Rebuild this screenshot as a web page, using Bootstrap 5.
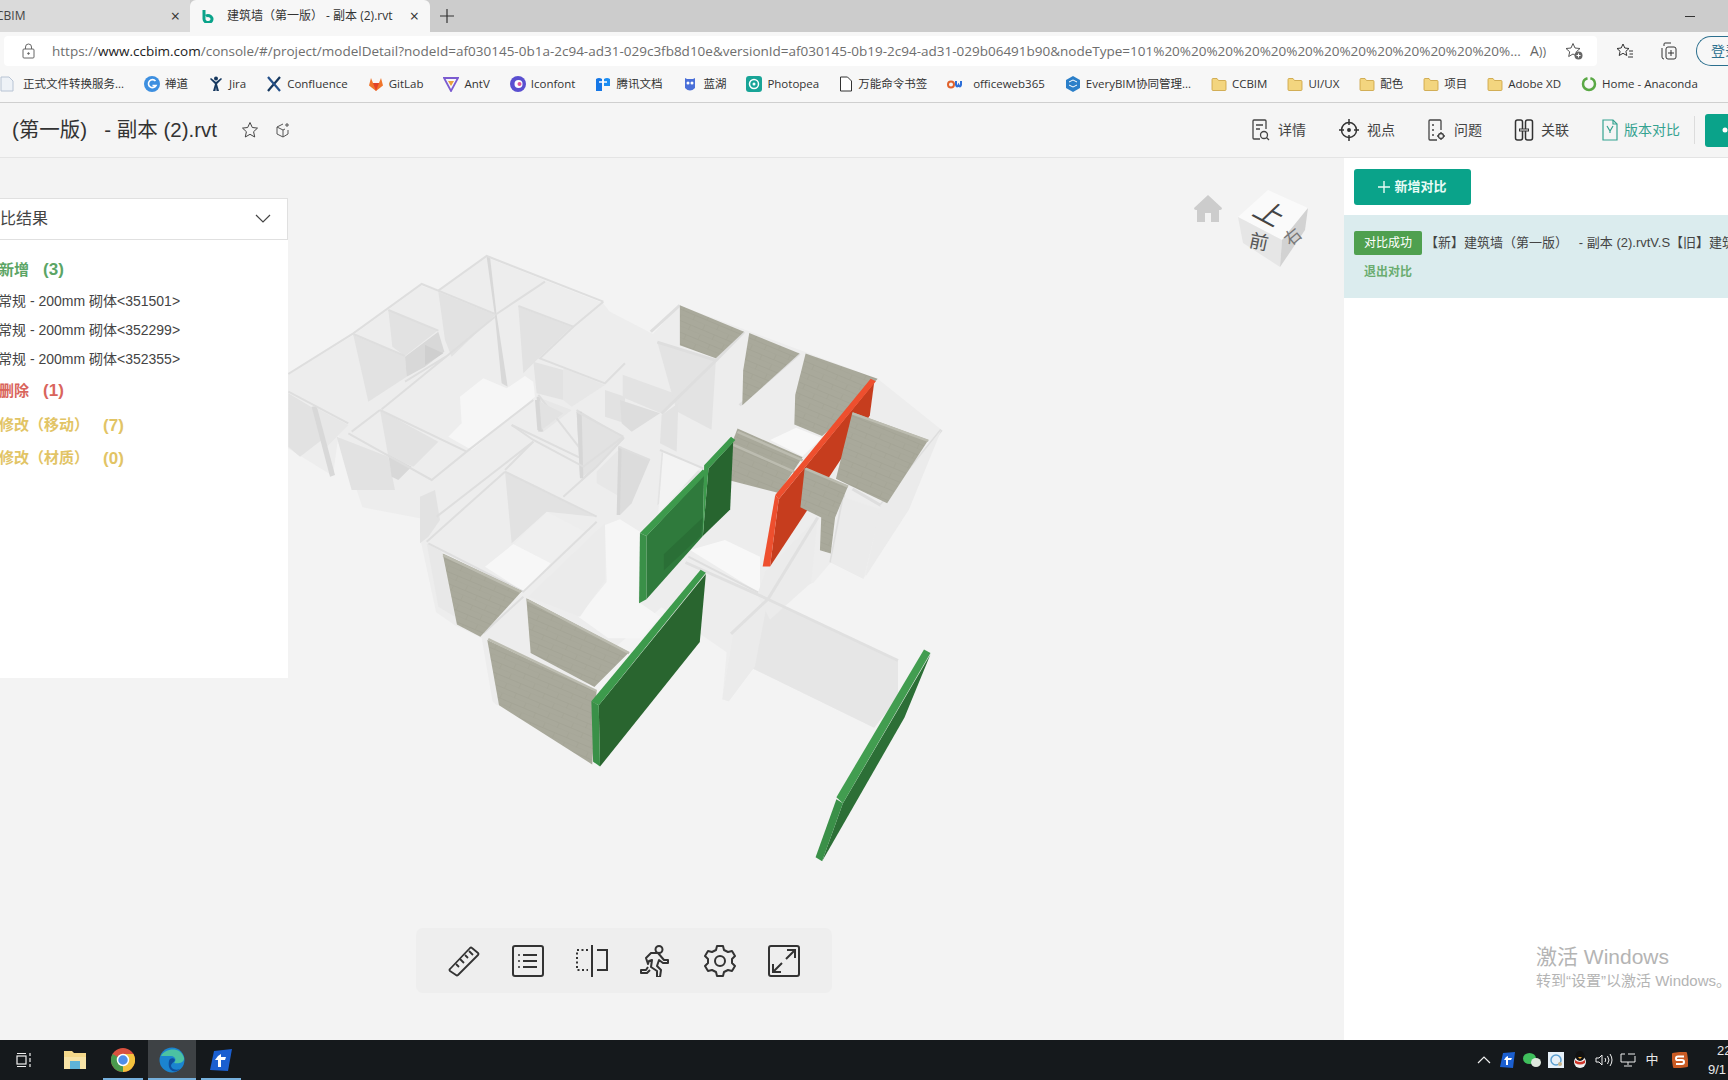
<!DOCTYPE html>
<html lang="zh-CN">
<head>
  <meta charset="UTF-8">
  <title>建筑墙（第一版） - 副本 (2).rvt</title>
  <link rel="stylesheet" href="https://cdn.jsdelivr.net/npm/bootstrap@5.3.3/dist/css/bootstrap.min.css">
  <style>
    html, body { height: 100%; }
    body { width: 1728px; height: 1080px; overflow: hidden; background: #f3f3f3; color: #333;
      font-family: "Liberation Sans", "Noto Sans CJK SC", sans-serif; font-size: 13px; }
    svg { display: block; flex: none; }
    .ui-font { font-family: "Open Sans", "Noto Sans CJK SC", sans-serif; }

    .tabstrip { height: 32px; background: #cccccc; }
    .tab-old { width: 190px; height: 32px; background: #dadada; padding-right: 10px; font-size: 12px; color: #444; }
    .tab-old span:first-child { margin-left: -4px; }
    .tab-now { width: 240px; height: 32px; background: #f7f7f7; border-radius: 6px 6px 0 0; padding: 0 11px 0 12px; font-size: 12px; color: #333; }
    .tab-title { margin-left: 13px; }
    .tab-x { font-size: 16px; line-height: 1; color: #333; }
    .tab-plus { width: 34px; }
    .win-min { margin-left: auto; width: 10px; height: 1px; background: #333; margin-right: 33px; }

    .addrbar { height: 38px; background: #f7f7f7; padding: 4px 0 4px 4px; }
    .addrbox { width: 1593px; height: 30px; background: #fff; border-radius: 4px; padding-left: 18px; flex: none; }
    .addrtext { width: 1470px; margin-left: 17px; font-size: 13.5px; color: #6e6e6e; white-space: nowrap; overflow: hidden; flex: none; }
    .addrtext b { font-weight: 400; color: #222; }
    .readaloud { margin-left: 8px; width: 20px; font-size: 14px; color: #666; white-space: nowrap; }
    .favadd { margin-left: 15px; }
    .favlist { margin-left: 19px; }
    .collect { margin-left: 26px; }
    .loginpill { margin-left: 18px; width: 32px; height: 30px; flex: none; border: 1px solid #2b6f8e; border-right: 0; border-radius: 15px 0 0 15px; color: #2b6f8e; padding-left: 14px; white-space: nowrap; overflow: hidden; font-size: 14px; line-height: 28px; }

    .bookmarks { height: 33px; background: #f7f7f7; border-bottom: 1px solid #cfcfcf; gap: 20px; padding-bottom: 4px; font-size: 11.5px; color: #333; white-space: nowrap; overflow: hidden; }
    .bm { gap: 5px; }

    .pagehead { height: 55px; background: #f5f5f5; border-bottom: 1px solid #e4e4e4; }
    .pagetitle { margin-left: 12px; font-size: 20.5px; color: #333; white-space: nowrap; }
    .headitem { gap: 7px; font-size: 14px; color: #444; margin-left: 32px; }
    .headcmp { color: #35a391; gap: 5px; }
    .headdiv { width: 1px; height: 28px; background: #dcdcdc; margin: 0 10px 0 14px; }
    .headbtn { width: 23px; height: 33px; background: #0aa38a; border-radius: 3px 0 0 3px; color: #fff; padding-left: 17px; }

    .workarea { height: 882px; }
    .leftcol { width: 288px; padding-top: 40px; flex: none; }
    .leftbox { background: #fff; height: 480px; overflow: hidden; }
    .leftsel { height: 42px; border: 1px solid #e0e0e0; border-left: 0; font-size: 16px; color: #444; padding-right: 16px; }
    .leftsel span { margin-left: -16px; }
    .sumrow { font-size: 15px; font-weight: 700; margin-left: -1px; white-space: nowrap; }
    .sumrow span + span { margin-left: 14px; font-size: 17px; }
    .c-add { color: #5ba565; height: 34px; margin-top: 13px; }
    .c-del { color: #d9655c; height: 34px; margin-bottom: 1px; }
    .c-mod { color: #e2c465; height: 33px; }
    .elemrow { height: 29px; line-height: 29px; font-size: 14px; color: #444; margin-left: -2px; white-space: nowrap; }

    .viewer { position: relative; overflow: hidden; }
    .modelcanvas { position: absolute; left: -8px; top: 82px; }
    .homeicon { position: absolute; left: 905px; top: 36px; }
    .viewcube { position: absolute; left: 936px; top: 32px; }
    .toolbox { position: absolute; left: 128px; top: 770px; width: 416px; height: 65px; background: #eeeeee; border-radius: 7px; padding: 0 32px; }

    .rightcol { width: 384px; flex: none; background: #fff; position: relative; z-index: 2; overflow: hidden; }
    .winmark2 { position: absolute; left: 192px; top: 786px; color: #b4b4b4; white-space: nowrap; }
    .winmark2 div:first-child { font-size: 21px; line-height: 26px; }
    .winmark2 div:last-child { font-size: 15px; line-height: 22px; }
    .addbtn { margin: 11px 0 10px 10px; width: 117px; height: 36px; background: #0aa38a; border-radius: 3px; color: #e8fbf6; font-size: 13px; font-weight: 700; gap: 4px; }
    .cmpinfo { height: 83px; background: #dbecee; padding: 16px 0 0 10px; overflow: hidden; white-space: nowrap; }
    .cmpbadge { width: 68px; height: 24px; background: #4fa04f; color: #fff; border-radius: 2px; font-size: 12px; line-height: 24px; text-align: center; flex: none; }
    .cmptext { font-size: 13px; color: #444; margin-left: 3px; }
    .cmpexit { margin: 8px 0 0 10px; font-size: 12px; font-weight: 700; color: #6aac70; }

    .taskbar { height: 40px; background: #15191c; color: #e8e8e8; }
    .taskslot { width: 48px; height: 40px; position: relative; flex: none; }
    .slot-folder { margin-left: 3px; }
    .slot-gap { margin-left: 1px; }
    .taskon { background: #3e4245; }
    .runline { position: absolute; left: 4px; right: 4px; bottom: 0; height: 2px; background: #76b0dc; }
    .taskon .runline { left: 0; right: 0; }
    .tray { width: 24px; height: 40px; flex: none; }
    .trayclock { width: 20px; margin-left: 16px; font-size: 13px; line-height: 19px; white-space: nowrap; }
    .trayclock div:first-child { padding-left: 9px; }
  </style>
</head>
<body>
  <svg width="0" height="0" class="position-absolute">
    <symbol id="folder" viewBox="0 0 16 16">
      <path d="M1 3.500q0-1 1-1h4l1.500 2h6.500q1 0 1 1v8q0 1-1 1H2q-1 0-1-1z" fill="#f3d57f" stroke="#c9a03c" stroke-width=".8"/>
    </symbol>
    <pattern id="brick" width="60" height="26" patternUnits="userSpaceOnUse" patternTransform="rotate(24)">
      <rect width="60" height="26" fill="#a9a99b"/>
      <path d="M0 13H60M0 26H60M20 0V13M50 13V26" stroke="#a1a193" stroke-width="1.500"/>
    </pattern>
  </svg>

  <!-- browser chrome -->
  <div class="tabstrip d-flex align-items-center ui-font">
    <div class="tab-old d-flex align-items-center justify-content-between"><span>CBIM</span><span class="tab-x">×</span></div>
    <div class="tab-now d-flex align-items-center">
      <svg width="12" height="14" viewBox="0 0 12 14"><path d="M2 1v9a4 3.500 0 1 0 2-3" fill="none" stroke="#0aa38a" stroke-width="3"/></svg>
      <span class="tab-title flex-grow-1 text-nowrap">建筑墙（第一版） - 副本 (2).rvt</span>
      <span class="tab-x">×</span>
    </div>
    <div class="tab-plus d-flex justify-content-center">
      <svg width="14" height="14" viewBox="0 0 14 14"><path d="M7 0v14M0 7h14" stroke="#333" stroke-width="1.200"/></svg>
    </div>
    <div class="win-min"></div>
  </div>

  <div class="addrbar d-flex align-items-center ui-font">
    <div class="addrbox d-flex align-items-center">
      <svg width="13" height="16" viewBox="0 0 13 16" fill="none" stroke="#666"><rect x="1" y="6" width="11" height="9" rx="1"/><path d="M3.500 6V4a3 3 0 0 1 6 0v2"/><circle cx="6.500" cy="10.500" r=".8" fill="#666"/></svg>
      <div class="addrtext">https://<b>www.ccbim.com</b>/console/#/project/modelDetail?nodeId=af030145-0b1a-2c94-ad31-029c3fb8d10e&amp;versionId=af030145-0b19-2c94-ad31-029b06491b90&amp;nodeType=101%20%20%20%20%20%20%20%20%20%20%20%20%20%...</div>
      <span class="readaloud">A<small>))</small></span>
      <svg class="favadd" width="18" height="18" viewBox="0 0 18 18" fill="none" stroke="#555"><path d="M8 1.500l2 4.500 5 .5-3.700 3.300 1 4.700L8 12l-4.300 2.500 1-4.700L1 6.500 6 6z"/><circle cx="13.500" cy="13.500" r="4" fill="#666" stroke="none"/><path d="M13.500 11.500v4M11.500 13.500h4" stroke="#fff"/></svg>
    </div>
    <svg class="favlist" width="18" height="18" viewBox="0 0 18 18" fill="none" stroke="#333"><path d="M7 2l1.800 4 4.200.5-3.100 2.800.9 4.200L7 11.300 3.200 13.500l.9-4.200L1 6.500 5.200 6z"/><path d="M13 9h4M13.500 12h3.500M12 15h5" stroke-width="1"/></svg>
    <svg class="collect" width="18" height="20" viewBox="0 0 18 20" fill="none" stroke="#333"><path d="M4 5V3q0-1 1-1h6M2 7V16q0 2 2 2"/><rect x="6" y="6" width="10" height="12" rx="2"/><path d="M11 9v6M8 12h6"/></svg>
    <div class="loginpill">登录</div>
  </div>

  <div class="bookmarks d-flex align-items-center ui-font">
    <div class="bm d-flex align-items-center"><svg width="14" height="16" viewBox="0 0 14 16"><path d="M1 1h8l4 4v10H1z" fill="#eef2f7" stroke="#b8c4d4"/></svg><span class="ms-1">正式文件转换服务...</span></div>
    <div class="bm d-flex align-items-center"><svg width="16" height="16" viewBox="0 0 16 16"><circle cx="8" cy="8" r="8" fill="#3d8fe0"/><path d="M11.500 5A4 4 0 1 0 12 9.500H8.500" fill="none" stroke="#fff" stroke-width="1.600"/></svg><span>禅道</span></div>
    <div class="bm d-flex align-items-center"><svg width="16" height="16" viewBox="0 0 16 16" fill="#16385f"><circle cx="8" cy="2.500" r="2"/><path d="M2 3l5 5-2 7h2.500L8 11l.5 4H11L9 8l5-5-1-1-5 4-5-4z"/></svg><span>Jira</span></div>
    <div class="bm d-flex align-items-center"><svg width="16" height="16" viewBox="0 0 16 16" fill="none" stroke="#16385f" stroke-width="2.200"><path d="M2 15C6 10 10 6 14 1"/><path d="M2 1c4 5 8 9 12 14" stroke="#24508a"/></svg><span>Confluence</span></div>
    <div class="bm d-flex align-items-center"><svg width="16" height="16" viewBox="0 0 16 16"><path d="M8 15L1 9.500 3 2l2 5h6l2-5 2 7.500z" fill="#f0752b"/><path d="M8 15L5 7h6z" fill="#e24329"/></svg><span>GitLab</span></div>
    <div class="bm d-flex align-items-center"><svg width="16" height="16" viewBox="0 0 16 16" fill="none"><path d="M1 2h14L8 15z" stroke="#7b5bd0" stroke-width="1.800"/><path d="M5 5h6L8 10z" fill="#e9a13b"/></svg><span>AntV</span></div>
    <div class="bm d-flex align-items-center"><svg width="16" height="16" viewBox="0 0 16 16"><circle cx="8" cy="8" r="8" fill="#5a4fd0"/><circle cx="8.500" cy="8" r="4" fill="#fff"/><circle cx="9.500" cy="8" r="2" fill="#e0559a"/></svg><span>Iconfont</span></div>
    <div class="bm d-flex align-items-center"><svg width="16" height="16" viewBox="0 0 16 16"><path d="M1 3q3-2 6 0v12H1z" fill="#1677e6"/><path d="M9 3q3-2 6 0v7H9z" fill="#1c8df2"/><path d="M4 6h8" stroke="#fff" stroke-width="1.500"/></svg><span>腾讯文档</span></div>
    <div class="bm d-flex align-items-center"><svg width="16" height="16" viewBox="0 0 16 16"><path d="M3 2l2 1h6l2-1v10q-5 5-10 0z" fill="#4a6fd8"/><circle cx="6" cy="7" r="1.500" fill="#fff"/><circle cx="10" cy="7" r="1.500" fill="#fff"/></svg><span>蓝湖</span></div>
    <div class="bm d-flex align-items-center"><svg width="16" height="16" viewBox="0 0 16 16"><rect width="16" height="16" rx="3" fill="#18a497"/><circle cx="8" cy="8" r="4.500" fill="none" stroke="#fff" stroke-width="1.500"/><circle cx="8" cy="8" r="1.500" fill="#fff"/></svg><span>Photopea</span></div>
    <div class="bm d-flex align-items-center"><svg width="14" height="16" viewBox="0 0 14 16"><path d="M1.500 1h7l4 4v10h-11z" fill="#fff" stroke="#333"/></svg><span>万能命令书签</span></div>
    <div class="bm d-flex align-items-center"><svg width="17" height="16" viewBox="0 0 17 16"><circle cx="4" cy="8.500" r="3" fill="none" stroke="#e0622c" stroke-width="2"/><path d="M9 5v4q1 3 2.500 0 1.500 3 2.500 0V5" fill="none" stroke="#2d6fd8" stroke-width="2"/></svg><span class="ms-1">officeweb365</span></div>
    <div class="bm d-flex align-items-center"><svg width="16" height="16" viewBox="0 0 16 16"><path d="M8 0l7 4v8l-7 4-7-4V4z" fill="#2b7fc9"/><path d="M4 6l4-2 4 2M4 9l4 2 4-2" stroke="#fff" fill="none"/></svg><span>EveryBIM协同管理...</span></div>
    <div class="bm d-flex align-items-center"><svg width="16" height="16"><use href="#folder"/></svg><span>CCBIM</span></div>
    <div class="bm d-flex align-items-center"><svg width="16" height="16"><use href="#folder"/></svg><span>UI/UX</span></div>
    <div class="bm d-flex align-items-center"><svg width="16" height="16"><use href="#folder"/></svg><span>配色</span></div>
    <div class="bm d-flex align-items-center"><svg width="16" height="16"><use href="#folder"/></svg><span>项目</span></div>
    <div class="bm d-flex align-items-center"><svg width="16" height="16"><use href="#folder"/></svg><span>Adobe XD</span></div>
    <div class="bm d-flex align-items-center"><svg width="16" height="16" viewBox="0 0 16 16"><circle cx="8" cy="8" r="6" fill="none" stroke="#5aa845" stroke-width="2.500" stroke-dasharray="26 3"/></svg><span>Home - Anaconda</span></div>
  </div>

  <!-- page header -->
  <div class="pagehead d-flex align-items-center">
    <div class="pagetitle">(第一版)&nbsp;&nbsp; - 副本 (2).rvt</div>
    <svg class="ms-4" width="18" height="18" viewBox="0 0 18 18" fill="none" stroke="#444"><path d="M9 1.500l2.300 5 5.200.6-3.900 3.600 1.100 5.300L9 13.300 4.300 16l1.100-5.300L1.500 7.100l5.200-.6z"/></svg>
    <svg class="ms-3" width="16" height="16" viewBox="0 0 16 16" fill="none" stroke="#555"><path d="M8 2L2 5v7l6 3 5-3V8M2 5l6 3v7M8 8l2-1"/><path d="M12 1v4M10 3h4"/></svg>

    <div class="ms-auto d-flex align-items-center">
      <div class="headitem d-flex align-items-center">
        <svg width="20" height="24" viewBox="0 0 20 24" fill="none" stroke="#444" stroke-width="1.300"><path d="M9 21H3q-1 0-1-1V3q0-1 1-1h11q1 0 1 1v8M5 7h7M5 11h4"/><circle cx="13" cy="17" r="3.500"/><path d="M15.500 19.500L18 22"/></svg>
        <span>详情</span>
      </div>
      <div class="headitem d-flex align-items-center">
        <svg width="22" height="24" viewBox="0 0 22 24" fill="none" stroke="#333" stroke-width="1.500"><circle cx="11" cy="12" r="7.500"/><circle cx="11" cy="12" r="1.200" fill="#333"/><path d="M11 1v6M11 17v6M1 12h5M16 12h5"/></svg>
        <span>视点</span>
      </div>
      <div class="headitem d-flex align-items-center">
        <svg width="20" height="24" viewBox="0 0 20 24" fill="none" stroke="#444" stroke-width="1.300"><path d="M10 22H3q-1 0-1-1V3q0-1 1-1h10q1 0 1 1v9M5 7h2M5 12h2M5 17h2"/><circle cx="14" cy="18" r="2.500"/><path d="M14 15v-1M14 21v1M11 18h-1M17 18h1"/></svg>
        <span>问题</span>
      </div>
      <div class="headitem d-flex align-items-center">
        <svg width="20" height="24" viewBox="0 0 20 24" fill="none" stroke="#333" stroke-width="1.500"><rect x="1.500" y="2" width="7" height="20" rx="2"/><rect x="11.500" y="2" width="7" height="20" rx="2"/><path d="M5 12h10" stroke-width="3" stroke="#333"/><path d="M6 12h8" stroke="#f5f5f5" stroke-width="1"/></svg>
        <span>关联</span>
      </div>
      <div class="headitem headcmp d-flex align-items-center">
        <svg width="18" height="24" viewBox="0 0 18 24" fill="none" stroke="#35a391" stroke-width="1.200"><path d="M2 2h10l4 4v16H2z"/><path d="M12 2v4h4M6 8l3 5 3-5M9 13v2"/></svg>
        <span>版本对比</span>
      </div>
      <div class="headdiv"></div>
      <div class="headbtn d-flex align-items-center">
        <svg width="6" height="8" viewBox="0 0 6 8"><circle cx="3" cy="4" r="2.500" fill="#fff"/></svg>
      </div>
    </div>
  </div>

  <div class="workarea d-flex">
    <div class="leftcol">
      <div class="leftbox">
        <div class="leftsel d-flex align-items-center justify-content-between">
          <span>对比结果</span>
          <svg width="16" height="10" viewBox="0 0 16 10" fill="none" stroke="#444" stroke-width="1.200"><path d="M1 1l7 7 7-7"/></svg>
        </div>
        <div class="sumrow c-add d-flex align-items-center"><span>新增</span><span>(3)</span></div>
        <div class="elemrow">常规 - 200mm 砌体&lt;351501&gt;</div>
        <div class="elemrow">常规 - 200mm 砌体&lt;352299&gt;</div>
        <div class="elemrow">常规 - 200mm 砌体&lt;352355&gt;</div>
        <div class="sumrow c-del d-flex align-items-center"><span>删除</span><span>(1)</span></div>
        <div class="sumrow c-mod d-flex align-items-center"><span>修改（移动）</span><span>(7)</span></div>
        <div class="sumrow c-mod d-flex align-items-center"><span>修改（材质）</span><span>(0)</span></div>
      </div>
    </div>

    <div class="viewer flex-grow-1">
      <svg class="modelcanvas" width="680" height="640" viewBox="0 0 1568 1568" preserveAspectRatio="none">
        <!-- ghost building silhouette -->
        <polygon fill="#ededed" points="18,330 170,232 325,112 365,125 475,42 745,155 760,175 860,230 920,160 1378,340 1525,465 1450,660 1345,830 1270,790 1230,840 1125,880 1425,1030 1425,1120 1370,1195 1090,1050 1035,1130 1020,1125 1030,1010 880,900 760,1010 700,1100 500,1140 490,1130 465,975 405,945 360,912 325,740 365,690 190,655 135,478 122,578 18,510"/>

        <!-- upper left rooms -->
        <g transform="scale(2.306 2.45) translate(5 10) scale(.3333)">
          <polygon fill="#f6f6f6" points="525,440 595,385 665,415 720,378 745,395 750,440 560,600 490,560 530,520"/>
          <g fill="#e2e2e2">
            <polygon points="205,255 360,320 365,380 250,455"/>
            <polygon points="310,180 460,240 360,318 322,290"/>
            <polygon points="460,125 630,195 500,320 480,270"/>
            <polygon points="700,170 860,230 765,320 715,370"/>
            <polygon points="285,480 460,575 385,650 310,620"/>
            <polygon points="155,560 310,620 330,720 200,720"/>
            <polygon points="745,335 835,360 835,450 755,430"/>
            <polygon points="875,480 1015,565 895,660 885,680"/>
            <polygon points="960,420 1020,440 1020,520 960,500"/>
            <polygon points="10,430 85,475 110,570 45,620 10,590"/>
          </g>
          <g fill="#e7e7e7">
            <polygon points="95,475 190,525 155,560 125,590"/>
            <polygon points="835,355 960,405 860,470 835,450"/>
            <polygon points="755,440 860,480 775,545"/>
            <polygon points="665,665 780,720 670,720"/>
          </g>
          <g fill="#d8d8d8">
            <polygon points="360,320 460,245 478,305 420,350 365,380"/>
            <polygon points="80,470 95,468 150,675 135,680"/>
            <polygon points="605,20 615,20 635,195 668,410 650,400 630,200"/>
            <polygon points="310,615 380,650 340,690 320,680"/>
            <polygon points="755,440 765,440 775,545 760,545"/>
          </g>
          <polygon fill="#cfcfcf" points="420,285 475,310 420,345"/>
          <g fill="none" stroke="#dedede" stroke-width="6">
            <path d="M10 372L205 250 410 102 460 122 605 18 955 155"/>
            <path d="M205 252L360 318M310 180L460 242M460 122L630 192M700 168L865 230M955 155L865 230 765 325 960 400 1020 340"/>
            <path d="M10 425L190 520M190 550L440 690 545 605 745 450M285 480L545 605M285 480L200 545"/>
            <path d="M290 478L630 200M630 195L780 95M360 395L490 315M760 435L920 640M680 525L920 640"/>
            <path d="M875 480L1015 565 890 690M660 660L745 575"/>
          </g>
        </g>

        <!-- upper right ghost rooms -->
        <g fill="#e3e3e3">
          <polygon points="790,330 920,380 880,425 790,385"/>
          <polygon points="880,520 975,570 870,650"/>
          <polygon points="870,250 1005,295 995,465 915,420"/>
        </g>
        <polygon fill="#f8f8f8" points="1130,490 1190,460 1250,485 1205,530"/>
        <g fill="none" stroke="#dedede" stroke-width="7">
          <path d="M855 225L922 160M1005 295L1070 225M1060 405L1198 278M870 250L1005 295M1005 295L880 425"/>
          <path d="M1320 610L1385 650 1525 465M1270 790L1300 625"/>
        </g>

        <!-- middle rooms -->
        <g transform="scale(2.306 2.45) translate(140 160) scale(.3333)">
          <polygon fill="#efefef" points="280,432 380,335 495,395 392,490"/>
          <polygon fill="#f7f7f7" points="195,500 280,432 392,490 312,575"/>
          <polygon fill="#f6f6f6" points="475,650 560,545 555,375 600,358 660,395 655,605 720,650 665,715 565,715"/>
          <polygon fill="#f3f3f3" points="730,150 840,205 715,340"/>
          <polygon fill="#f8f8f8" points="810,450 915,420 1020,470 1020,580"/>
          <g fill="#e2e2e2">
            <polygon points="255,215 525,350 380,335 275,430"/>
            <polygon points="470,35 610,110 530,200 480,235"/>
            <polygon points="350,0 430,40 365,90"/>
            <polygon points="725,45 775,10 770,155 720,130"/>
            <polygon points="0,290 45,270 60,360 25,410 0,430"/>
          </g>
          <polygon fill="#dcdcdc" points="595,140 690,180 635,310 600,345"/>
          <polygon fill="#dddddd" points="600,0 720,40 635,95 605,70"/>
          <polygon fill="#e7e7e7" points="530,215 595,150 600,290 530,250"/>
          <polygon fill="#e8e8e8" points="20,430 65,455 105,650 55,620"/>
          <polygon fill="#ebebeb" points="325,590 555,370 555,540 480,650"/>
          <g fill="#d6d6d6">
            <polygon points="470,35 485,35 490,235 480,235"/>
            <polygon points="595,140 605,140 600,345 590,345"/>
            <polygon points="345,0 358,0 365,95 352,90"/>
          </g>
          <g fill="none" stroke="#dedede" stroke-width="6">
            <path d="M275 75L340 120 490 200 610 110M340 125L50 350M430 290L530 200 610 115"/>
            <path d="M255 215L530 350M20 425L255 215M25 430L310 575 530 365"/>
            <path d="M720 150L850 205M310 590L190 700M805 470L1020 580M470 35L610 110M595 140L690 180"/>
          </g>
        </g>

        <!-- lower right ghost rooms -->
        <g fill="#e6e6e6">
          <polygon points="1125,880 1425,1030 1425,1120 1370,1195 1090,1050"/>
        </g>
        <g fill="#ebebeb">
          <polygon points="1020,1125 1045,965 1125,880 1095,1045 1035,1130"/>
          <polygon points="1120,810 1240,680 1225,840 1130,930 1100,870"/>
          <polygon points="1270,790 1300,630 1385,660 1345,830"/>
          <polygon points="1385,650 1525,465 1450,660 1350,825"/>
        </g>
        <path d="M935 790L1125 880 1425 1030M1125 880L1240 680M1040 965L1125 880" fill="none" stroke="#e0e0e0" stroke-width="7"/>

        <!-- unchanged brick walls -->
        <g fill="url(#brick)">
          <polygon points="922,160 1070,225 1005,290 922,258"/>
          <polygon points="1082,228 1198,278 1066,405 1068,320"/>
          <polygon points="1212,278 1378,340 1310,425 1250,480 1186,452 1188,380"/>
          <polygon points="1042,498 1055,462 1205,532 1150,620 1040,590"/>
          <polygon points="375,768 558,860 462,972 408,942"/>
          <polygon points="568,878 805,1010 725,1095 578,1012"/>
          <polygon points="478,980 730,1105 720,1285 505,1140"/>
        </g>
        <path d="M1055 470L1205 540M1042 500L1190 570M480 978L730 1105M570 882L805 1012M376 772L555 862" fill="none" stroke="#bcbcb0" stroke-width="6"/>

        <!-- deleted wall -->
        <polygon points="1150,635 1370,350 1360,430 1130,800" fill="#c63d1e"/>
        <polygon points="1142,625 1150,635 1130,800 1113,800" fill="#ee4f2e"/>
        <polygon points="1142,625 1362,340 1374,346 1150,635" fill="#ee4f2e"/>
        <!-- brick walls in front of it -->
        <g fill="url(#brick)">
          <polygon points="1320,422 1495,490 1400,645 1282,585"/>
          <polygon points="1210,558 1310,603 1280,680 1270,768 1245,760 1248,680 1200,655"/>
        </g>
        <path d="M1320 425L1495 492M1212 560L1310 604" fill="none" stroke="#bcbcb0" stroke-width="6"/>

        <!-- added walls -->
        <polygon points="845,725 978,575 975,725 845,880" fill="#2f7a3c"/>
        <polygon points="885,770 975,680 970,725 885,810" fill="#2a6f36"/>
        <polygon points="830,718 975,562 985,570 845,725" fill="#3d9a4c"/>
        <polygon points="830,718 845,725 845,880 828,890" fill="#3a9048"/>
        <polygon points="988,560 1045,495 1038,660 975,725" fill="#27652f"/>
        <polygon points="978,552 1040,482 1050,490 988,560 975,725" fill="#3d9a4c"/>
        <polygon points="735,1140 982,818 968,985 738,1290" fill="#29652f"/>
        <polygon points="718,1130 970,808 982,815 735,1140" fill="#3d9a4c"/>
        <polygon points="718,1130 735,1140 738,1290 722,1278" fill="#3a9048"/>
        <polygon points="1298,1380 1500,1015 1440,1170 1250,1522" fill="#2c6f36"/>
        <polygon points="1283,1365 1485,1003 1500,1012 1298,1380" fill="#429d50"/>
        <polygon points="1283,1370 1298,1380 1250,1522 1235,1512" fill="#3a9048"/>
      </svg>

      <svg class="homeicon" width="30" height="30" viewBox="0 0 30 30" fill="#cccccc"><path d="M15 1L1 14q0 2 2 2h1v12h8v-9h6v9h8V16h1q2 0 2-2z"/></svg>
      <svg class="viewcube" width="90" height="84" viewBox="0 0 90 84">
        <polygon points="14,27 44,0 84,18 58,50" fill="#fafafa"/>
        <polygon points="14,27 58,50 56,77 19,53" fill="#e6e6e6"/>
        <polygon points="84,18 58,50 56,77 81,40" fill="#d2d2d2"/>
        <text font-size="27" fill="#444" text-anchor="middle" dominant-baseline="central" transform="translate(46 24) rotate(28) skewX(-18)">上</text>
        <text font-size="19" fill="#555" text-anchor="middle" dominant-baseline="central" transform="translate(35 52) rotate(12)">前</text>
        <text font-size="17" fill="#777" text-anchor="middle" dominant-baseline="central" transform="translate(69 47) rotate(-40)">右</text>
      </svg>

      <div class="toolbox d-flex align-items-center justify-content-between">
        <svg width="32" height="32" viewBox="0 0 32 32" fill="none" stroke="#333" stroke-width="1.800" stroke-linejoin="round"><path d="M2 24L22 3q1-1 2 0l6 5q1 1 0 2L10 30q-1 1-2 0l-6-4q-1-1 0-2z"/><path d="M8 19l3 3M12 14l4 4M17 10l3 3M21 6l4 4"/></svg>
        <svg width="32" height="32" viewBox="0 0 32 32" fill="none" stroke="#333" stroke-width="2"><rect x="1" y="1" width="30" height="30" rx="2"/><path d="M11 10h14M11 16h14M11 22h14"/><path d="M6 10h2M6 16h2M6 22h2" stroke-width="1.500"/></svg>
        <svg width="32" height="32" viewBox="0 0 32 32" fill="none" stroke="#333" stroke-width="2"><path d="M16 0v32" stroke-width="2"/><path d="M21 5h10v20H21"/><path d="M12 5H1v20h11" stroke-dasharray="2 2.500"/></svg>
        <svg width="32" height="32" viewBox="0 0 32 32" fill="none" stroke="#333" stroke-width="2" stroke-linejoin="round"><circle cx="19" cy="4.500" r="3.500"/><path d="M6 13l5-5h7l6 7h4v3h-5l-4-3-2 6 4 4-1 7h-3v-6l-6-4 1-7-3 1-1 3z"/><path d="M8 22l-2 3H1v3h6l3-3"/></svg>
        <svg width="32" height="32" viewBox="0 0 32 32" fill="none" stroke="#333" stroke-width="2" stroke-linejoin="round"><circle cx="16" cy="16" r="5"/><path d="M13 1h6l1 4 4 2 4-1 3 5-3 3v4l3 3-3 5-4-1-4 2-1 4h-6l-1-4-4-2-4 1-3-5 3-3v-4L1 11l3-5 4 1 4-2z"/></svg>
        <svg width="32" height="32" viewBox="0 0 32 32" fill="none" stroke="#333" stroke-width="2"><rect x="1" y="1" width="30" height="30" rx="2"/><path d="M18 14L27 5M19 5h8v8M14 18l-9 9M5 19v8h8"/></svg>
      </div>
    </div>

    <div class="rightcol">
      <div class="addbtn d-flex align-items-center justify-content-center">
        <svg width="12" height="12" viewBox="0 0 12 12"><path d="M6 0v12M0 6h12" stroke="#e8fbf6" stroke-width="1.400"/></svg>
        <span>新增对比</span>
      </div>
      <div class="cmpinfo">
        <div class="d-flex align-items-center">
          <span class="cmpbadge">对比成功</span>
          <span class="cmptext">【新】建筑墙（第一版）&nbsp;&nbsp;&nbsp;- 副本 (2).rvtV.S【旧】建筑墙（第一版）</span>
        </div>
        <div class="cmpexit">退出对比</div>
      </div>
      <div class="winmark2">
        <div>激活 Windows</div>
        <div>转到“设置”以激活 Windows。</div>
      </div>
    </div>
  </div>

  <!-- windows taskbar -->
  <div class="taskbar d-flex align-items-center">
    <div class="taskslot d-flex align-items-center justify-content-center">
      <svg width="16" height="16" viewBox="0 0 16 16" fill="none" stroke="#eee" stroke-width="1.200"><rect x="1" y="4" width="9" height="8"/><path d="M1 1.500h9M1 14.500h9M14 1v3M14 6v4M14 12v3"/></svg>
    </div>
    <div class="taskslot slot-folder d-flex align-items-center justify-content-center">
      <svg width="24" height="22" viewBox="0 0 24 22"><path d="M1 2h8l2 2h12v16H1z" fill="#f4d88a"/><path d="M1 8h22v12H1z" fill="#f7e3a6"/><path d="M7 12h10v8H7z" fill="#5fb4d8"/></svg>
    </div>
    <div class="taskslot d-flex align-items-center justify-content-center">
      <svg width="24" height="24" viewBox="0 0 24 24"><circle cx="12" cy="12" r="12" fill="#d9513f"/><path d="M12 12L1.600 6A12 12 0 0 0 12 24z" fill="#4a9a4d"/><path d="M12 12L12 24A12 12 0 0 0 22.400 6H12z" fill="#f3c23c"/><circle cx="12" cy="12" r="5.500" fill="#4f8ee8" stroke="#fff" stroke-width="1.500"/></svg>
      <div class="runline"></div>
    </div>
    <div class="taskslot taskon slot-gap d-flex align-items-center justify-content-center">
      <svg width="26" height="26" viewBox="0 0 26 26"><circle cx="13" cy="13" r="12.500" fill="#1b84cf"/><path d="M2 9C6 1 22-1 25 11c.5 5-6 6-10 5 3-3 1-7-3-7-4 0-8 0-10 0z" fill="#4cc2a2"/><path d="M10 14c0-3 5-4 6-1-1 3-6 4-3 8 2 2 5 2 8 1-5 5-13 2-11-8z" fill="#0f4f9e"/></svg>
      <div class="runline"></div>
    </div>
    <div class="taskslot slot-gap d-flex align-items-center justify-content-center">
      <svg width="24" height="24" viewBox="0 0 24 24"><path d="M5 3l18-2-4 22L1 22z" fill="#1b5fd0"/><path d="M9 8l3-2v3h5l-1 3h-4v7H9v-7H6z" fill="#fff"/></svg>
      <div class="runline"></div>
    </div>

    <div class="ms-auto d-flex align-items-center">
      <div class="tray d-flex align-items-center justify-content-center"><svg width="14" height="8" viewBox="0 0 14 8" fill="none" stroke="#eee" stroke-width="1.200"><path d="M1 7l6-6 6 6"/></svg></div>
      <div class="tray d-flex align-items-center justify-content-center"><svg width="16" height="16" viewBox="0 0 16 16"><path d="M3 1l12-1-2 16-13-1z" fill="#1b5fd0"/><path d="M6 5l2-1v2h4l-1 2H8v5H6V8H4z" fill="#fff"/></svg></div>
      <div class="tray d-flex align-items-center justify-content-center"><svg width="18" height="16" viewBox="0 0 18 16"><ellipse cx="6.500" cy="6.500" rx="6.500" ry="5.500" fill="#3fbf5c"/><ellipse cx="13" cy="10.500" rx="5" ry="4.500" fill="#dfe8de"/></svg></div>
      <div class="tray d-flex align-items-center justify-content-center"><svg width="16" height="16" viewBox="0 0 16 16"><rect width="16" height="16" fill="#e6f0f8"/><circle cx="8" cy="8" r="5" fill="none" stroke="#5b9fd0" stroke-width="1.500"/><circle cx="12" cy="12" r="2" fill="#c9b48a"/></svg></div>
      <div class="tray d-flex align-items-center justify-content-center"><svg width="16" height="18" viewBox="0 0 16 18"><ellipse cx="8" cy="11" rx="6" ry="6" fill="#f0f0f0"/><path d="M3 9q5 4 10 0v3q-5 3-10 0z" fill="#d0362b"/><ellipse cx="8" cy="5" rx="4.500" ry="5" fill="#111"/><path d="M6 6h4l-2 2z" fill="#eda62e"/></svg></div>
      <div class="tray d-flex align-items-center justify-content-center"><svg width="18" height="14" viewBox="0 0 18 14" fill="none" stroke="#eee"><path d="M1 5h3l3-3v10L4 9H1zM10 5q1.500 2 0 4M12.500 3q3 4 0 8M15 1q4 6 0 12"/></svg></div>
      <div class="tray d-flex align-items-center justify-content-center"><svg width="16" height="14" viewBox="0 0 16 14" fill="none" stroke="#eee"><path d="M5 1H1v8h14V3M8 9v3M4 13h8M8 1h7"/></svg></div>
      <div class="tray d-flex align-items-center justify-content-center">中</div>
      <div class="tray ms-1 d-flex align-items-center justify-content-center"><svg width="16" height="16" viewBox="0 0 16 16"><rect width="16" height="16" rx="3" fill="#c95b24" transform="rotate(-8 8 8)"/><path d="M12 4.500H6q-2 0-2 2t2 1.500h4q2 0 2 2t-2 2H4" fill="none" stroke="#fff" stroke-width="2"/></svg></div>
      <div class="trayclock">
        <div>22</div>
        <div>9/1</div>
      </div>
    </div>
  </div>
</body>
</html>
